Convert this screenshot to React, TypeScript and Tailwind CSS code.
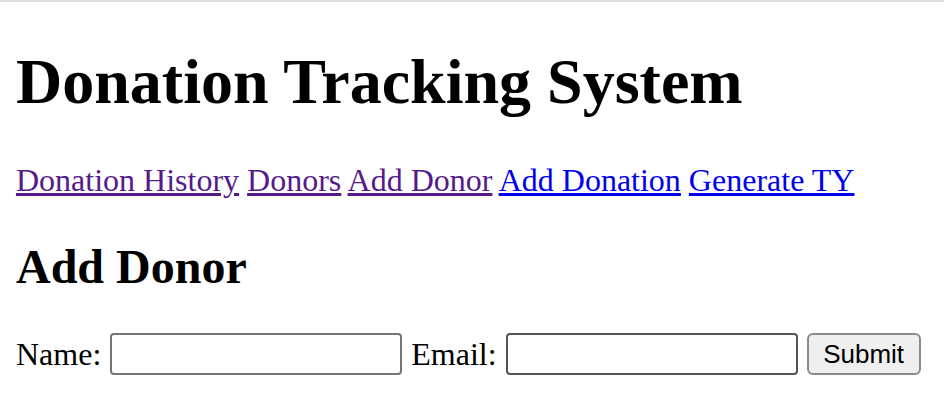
export default function App() {
    return (
        <div className="min-h-[410px] bg-white text-black font-['Liberation_Serif','Times_New_Roman',serif]">
            <div className="h-[2px] bg-[#dcdcdc]" />
            <div className="px-4">
                <h1 className="mt-[43px] text-[64px] leading-[74px] font-bold">Donation Tracking System</h1>

                {/* Nav */}
                <p className="mt-[43px] text-[32px] leading-[37px]">
                    <a href="#" className="underline text-[#551a8b]">Donation History</a>{' '}
                    <a href="#" className="underline text-[#551a8b]">Donors</a>{' '}
                    <a href="#" className="underline text-[#551a8b]">Add Donor</a>{' '}
                    <a href="#" className="underline text-[#0000ee]">Add Donation</a>{' '}
                    <a href="#" className="underline text-[#0000ee]">Generate TY</a>
                </p>

                <h2 className="mt-[40px] text-[48px] leading-[55px] font-bold">Add Donor</h2>

                <form className="mt-[36px] flex items-center gap-[9px] text-[32px]" onSubmit={(e) => e.preventDefault()}>
                    <label>Name:</label>
                    <input type="text" className="w-[292px] h-[42px] rounded-[4px] border-2 border-[#767676] bg-white" />
                    <label>Email:</label>
                    <input type="email" className="w-[292px] h-[42px] rounded-[4px] border-2 border-[#555555] bg-white" />
                    <button type="submit" className="w-[114px] h-[42px] rounded-[6px] border-2 border-[#8a8a8a] bg-[#efefef] text-[26px] font-['Liberation_Sans',Arial,sans-serif]">Submit</button>
                </form>
            </div>
        </div>
    );
}
